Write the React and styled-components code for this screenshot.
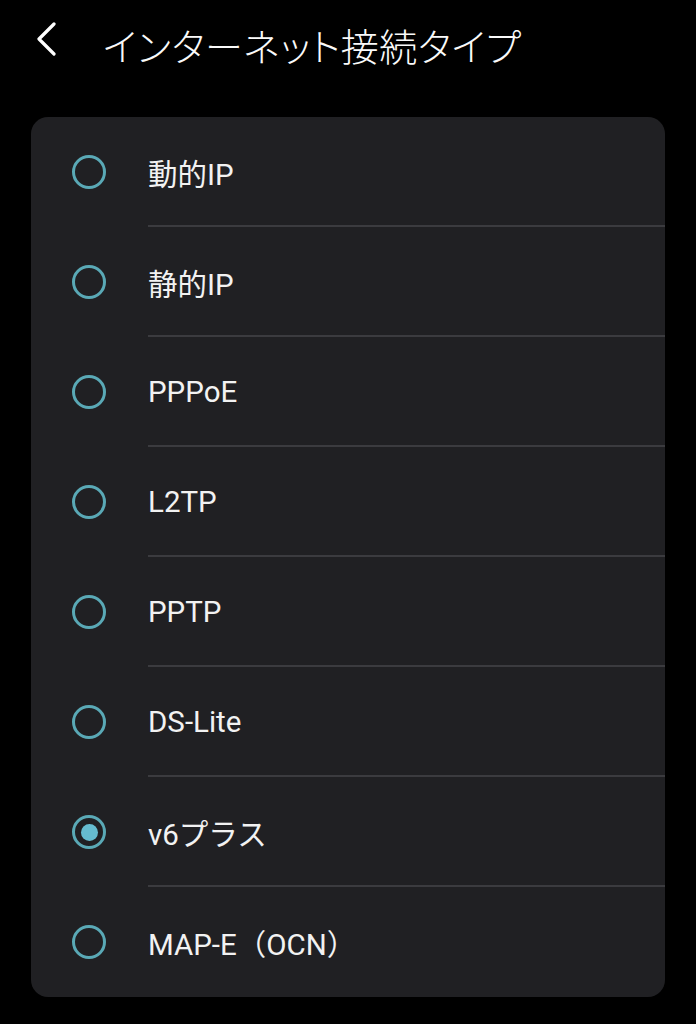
import React, { useState } from "react";
import styled, { createGlobalStyle } from "styled-components";

const Global = createGlobalStyle`
  html, body { margin: 0; padding: 0; background: #000; }
  body { font-family: Roboto, "Noto Sans CJK JP", sans-serif; color: #f4f4f4; }
`;

const Page = styled.div`
  width: 696px;
  min-height: 1024px;
  background: #000;
  padding: 0 31px;
  box-sizing: border-box;
`;

const Header = styled.header`
  height: 88px;
  display: flex;
  align-items: center;
  margin: 0 -31px 29px;
  padding-left: 34px;
`;

const BackButton = styled.button`
  background: none;
  border: none;
  padding: 0;
  width: 24px;
  height: 34px;
  margin-top: -10px;
  display: flex;
  align-items: center;
  justify-content: center;
  color: #fff;
  cursor: pointer;
`;

const Title = styled.h1`
  margin: 0 0 0 45px;
  font-family: "Noto Sans CJK JP", sans-serif;
  font-weight: 300;
  font-size: 38px;
  font-feature-settings: "palt";
  color: #fafafa;
  letter-spacing: 0.6px;
`;

const Card = styled.div`
  background: #202023;
  border-radius: 17px;
  overflow: hidden;
`;

const Row = styled.label`
  display: flex;
  align-items: center;
  height: ${(p) => (p.$last ? 110 : 110)}px;
  cursor: pointer;
`;

const RadioCell = styled.div`
  width: 117px;
  flex: none;
  display: flex;
  align-items: center;
  padding-left: 41px;
  box-sizing: border-box;
`;

const Ring = styled.span`
  width: 34px;
  height: 34px;
  border-radius: 50%;
  border: 3.5px solid #5aa9b6;
  box-sizing: border-box;
  display: flex;
  align-items: center;
  justify-content: center;
`;

const Dot = styled.span`
  width: 17px;
  height: 17px;
  border-radius: 50%;
  background: #66bcd0;
`;

const Body = styled.div`
  flex: 1;
  align-self: stretch;
  display: flex;
  align-items: center;
  border-bottom: ${(p) => (p.$last ? "none" : "2px solid #3b3b3f")};
`;

const Label = styled.span`
  font-size: 29.5px;
  color: #f2f2f2;
  padding-top: ${(p) => (p.$last ? 0 : 2)}px;
`;

const items = [
  "動的IP",
  "静的IP",
  "PPPoE",
  "L2TP",
  "PPTP",
  "DS-Lite",
  "v6プラス",
  "MAP-E（OCN）",
];

export default function App() {
  const [sel, setSel] = useState(6);
  return (
    <Page>
      <Global />
      <Header>
        <BackButton aria-label="戻る">
          <svg width="22" height="34" viewBox="0 0 22 34" fill="none">
            <path d="M19 2 L4 17 L19 32" stroke="#fff" strokeWidth="3.2" strokeLinecap="round" strokeLinejoin="round" />
          </svg>
        </BackButton>
        <Title>インターネット接続タイプ</Title>
      </Header>
      <Card>
        {items.map((t, i) => {
          const last = i === items.length - 1;
          return (
            <Row key={t} $last={last} onClick={() => setSel(i)}>
              <RadioCell>
                <Ring>{sel === i && <Dot />}</Ring>
              </RadioCell>
              <Body $last={last}>
                <Label $last={last}>{t}</Label>
              </Body>
            </Row>
          );
        })}
      </Card>
    </Page>
  );
}
